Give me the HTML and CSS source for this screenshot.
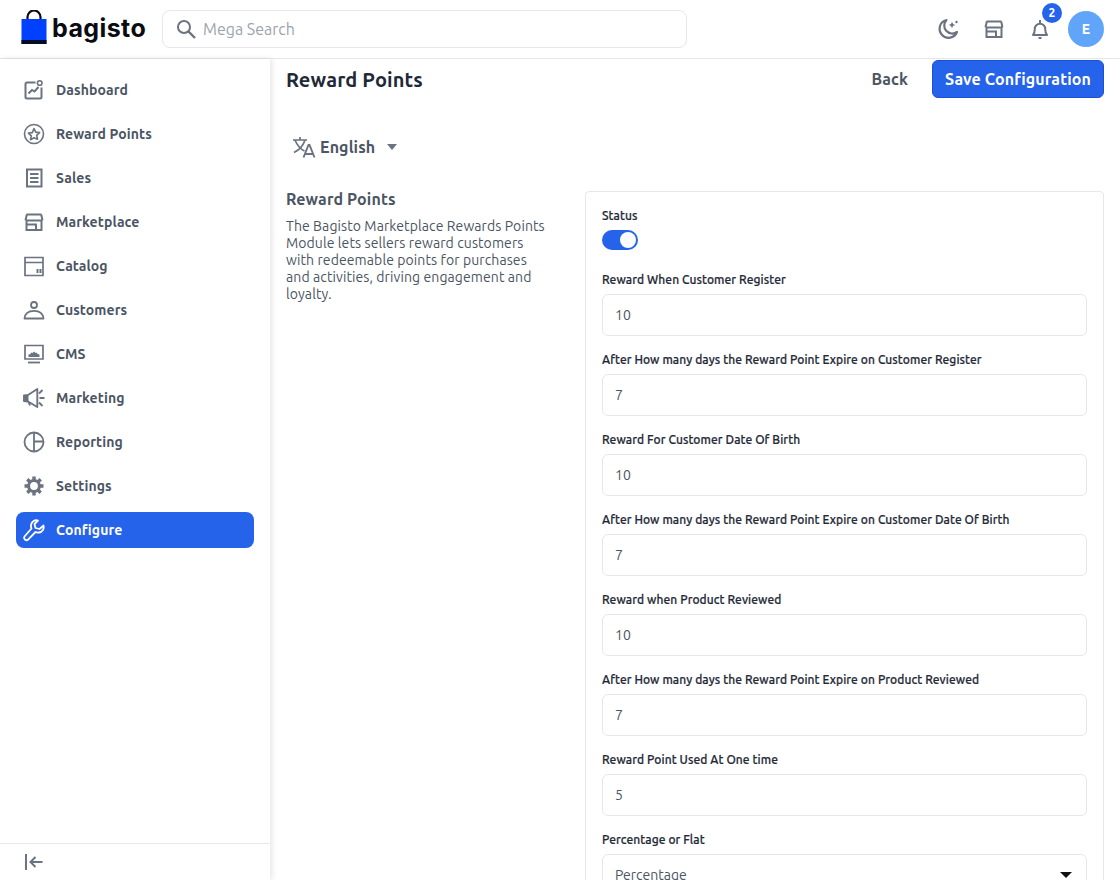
FILE: index.html
```html
<!DOCTYPE html>
<html lang="en">
<head>
<meta charset="utf-8">
<title>Reward Points</title>
<link rel="stylesheet" href="styles.css">
</head>
<body>
<header class="topbar">
  <div class="brand">
    <svg class="bag" viewBox="0 0 26 35" width="26" height="35"><path d="M6.500 9.500V7a6.500 6.500 0 0 1 13 0v2.500" fill="none" stroke="#0b0b12" stroke-width="2.200"/><rect x="0.500" y="9" width="25" height="25" fill="#0041ff"/><rect x="0.500" y="30" width="25" height="4" fill="#060b26"/></svg>
    <span class="wordmark">bagisto</span>
  </div>
  <div class="search">
    <svg class="search-icon" viewBox="0 0 24 24" width="24" height="24"><circle cx="10" cy="10" r="6" fill="none" stroke="#6b7280" stroke-width="2"/><path d="M14.500 14.500 21 21" stroke="#6b7280" stroke-width="2.400"/></svg>
    <span class="search-text">Mega Search</span>
  </div>
  <div class="top-actions">
    <svg class="top-icon" viewBox="0 0 24 24" width="24" height="24"><path d="M10.500 3A9 9 0 1 0 21 15a8 8 0 0 1-10.500-12Z" fill="none" stroke="#6b7280" stroke-width="2.200" stroke-linejoin="round"/><path d="M16 4.800l1 2.200 2.200 1-2.200 1-1 2.200-1-2.200-2.200-1 2.200-1Z" fill="#6b7280"/><circle cx="20.500" cy="5" r="1.200" fill="#6b7280"/></svg>
    <svg class="top-icon" viewBox="0 0 24 24" width="24" height="24"><path d="M4.500 4.500h15M3.500 10.500h17M4.800 4.500l-1.300 6M19.200 4.500l1.300 6M4.500 10.500V20h15v-9.500M4.500 14.500H14V20" fill="none" stroke="#6b7280" stroke-width="2"/></svg>
    <div class="bell-wrap">
      <svg class="top-icon" viewBox="0 0 24 24" width="24" height="24"><path d="M5 18c1.500-1.500 1.800-3 1.800-6a5.200 5.200 0 0 1 10.400 0c0 3 .3 4.500 1.800 6ZM12 3v3.500" fill="none" stroke="#6b7280" stroke-width="2" stroke-linejoin="round"/><path d="M10.500 21h3" stroke="#6b7280" stroke-width="2"/></svg>
      <span class="badge">2</span>
    </div>
    <span class="avatar">E</span>
  </div>
</header>
<div class="shell">
  <aside class="sidebar">
    <nav class="nav">
      <a class="nav-item"><svg viewBox="0 0 24 24" width="24" height="24"><path d="M13.500 4.500H5a1.500 1.500 0 0 0-1.500 1.500v13A1.500 1.500 0 0 0 5 20.500h13a1.500 1.500 0 0 0 1.500-1.500V9.500" fill="none" stroke="#6b7280" stroke-width="2"/><circle cx="17.700" cy="5" r="2.300" fill="none" stroke="#6b7280" stroke-width="1.600"/><path d="M6.500 15.500l3.500-3.500 2.500 1.500 4-4.500" fill="none" stroke="#6b7280" stroke-width="2"/></svg><span>Dashboard</span></a>
      <a class="nav-item"><svg viewBox="0 0 24 24" width="24" height="24"><circle cx="12" cy="12" r="9.500" fill="none" stroke="#6b7280" stroke-width="1.600"/><path d="M12 6.500l1.700 3.600 3.900.5-2.900 2.700.8 3.900L12 15.800l-3.500 1.900.8-3.900-2.900-2.700 3.900-.5Z" fill="none" stroke="#6b7280" stroke-width="1.600" stroke-linejoin="round"/></svg><span>Reward Points</span></a>
      <a class="nav-item"><svg viewBox="0 0 24 24" width="24" height="24"><path d="M5 3.500h14.500v17H5Z" fill="none" stroke="#6b7280" stroke-width="2"/><path d="M8 8h8.500M8 12h8.500M8 16h8.500" stroke="#6b7280" stroke-width="1.800"/></svg><span>Sales</span></a>
      <a class="nav-item"><svg viewBox="0 0 24 24" width="24" height="24"><path d="M4.500 4.500h15M3.500 10.500h17M4.800 4.500l-1.300 6M19.200 4.500l1.300 6M4.500 10.500V20h15v-9.500M4.500 14.500H14V20" fill="none" stroke="#6b7280" stroke-width="2"/></svg><span>Marketplace</span></a>
      <a class="nav-item"><svg viewBox="0 0 24 24" width="24" height="24"><path d="M3 3.500h18v18H3ZM3 8.500h18" fill="none" stroke="#6b7280" stroke-width="1.700"/><path d="M15 15h2v4h-2ZM18 15h2v4h-2Z" fill="#6b7280" transform="translate(-.5 0)"/></svg><span>Catalog</span></a>
      <a class="nav-item"><svg viewBox="0 0 24 24" width="24" height="24"><circle cx="12" cy="7" r="3" fill="none" stroke="#6b7280" stroke-width="1.800"/><path d="M2.500 20.500C3 15 7 12.800 12 12.800s9 2.200 9.500 7.700Z" fill="none" stroke="#6b7280" stroke-width="1.800" stroke-linejoin="round"/></svg><span>Customers</span></a>
      <a class="nav-item"><svg viewBox="0 0 24 24" width="24" height="24"><path d="M3 3.500h18v13.500H3Z" fill="none" stroke="#6b7280" stroke-width="1.700"/><path d="M6 20.500h12" stroke="#6b7280" stroke-width="1.800"/><path d="M6.500 15v-2.500l2-.5.700-1.500 1.300.5L12 9.500l1.500 1.500 1.300-.5.700 1.500 2 .5V15Z" fill="#6b7280"/></svg><span>CMS</span></a>
      <a class="nav-item"><svg viewBox="0 0 24 24" width="24" height="24"><path d="M2 9.500v5.500l4 .5 9.300 5.500V3L6 9Z" fill="none" stroke="#6b7280" stroke-width="1.900" stroke-linejoin="round"/><path d="M2 9.500h4.500v6H2Z" fill="#6b7280"/><path d="M6.500 16l1.500 3.500M17.500 12h5M17 7.500l3.500-3.500M17 16.500l3.500 3.500" stroke="#6b7280" stroke-width="1.900" fill="none"/></svg><span>Marketing</span></a>
      <a class="nav-item"><svg viewBox="0 0 24 24" width="24" height="24"><circle cx="12" cy="12" r="9.500" fill="none" stroke="#6b7280" stroke-width="1.800"/><path d="M12 2.500v19M12 11.500h9.500" stroke="#6b7280" stroke-width="1.800" fill="none"/></svg><span>Reporting</span></a>
      <a class="nav-item"><svg viewBox="0 0 24 24" width="24" height="24"><circle cx="12" cy="12" r="5.400" fill="none" stroke="#6b7280" stroke-width="3"/><path d="M12 2.500v3.500M12 18v3.500M2.500 12H6M18 12h3.500M5.300 5.300l2.500 2.500M16.200 16.200l2.500 2.500M5.300 18.700l2.500-2.500M16.200 7.800l2.500-2.500" stroke="#6b7280" stroke-width="3.400"/></svg><span>Settings</span></a>
      <a class="nav-item active"><svg viewBox="0 0 24 24" width="24" height="24"><path d="M21.500 7.500 17.500 11l-4-1-1-4 3.500-3.500c-3-1-6.500 1-7 4.500-.2 1.300 0 2.500.5 3.500L2.500 18.500a2 2 0 0 0 0 2.500l.8.800a2 2 0 0 0 2.500 0L13.500 14c1 .5 2.200.7 3.500.5 3.500-.5 5.500-4 4.500-7Z" fill="none" stroke="#fff" stroke-width="1.800" stroke-linejoin="round"/></svg><span>Configure</span></a>
    </nav>
    <div class="collapse">
      <svg viewBox="0 0 24 24" width="24" height="24"><path d="M4 4v16M20.500 12H8.500M13.500 7l-5 5 5 5" fill="none" stroke="#6b7280" stroke-width="2"/></svg>
    </div>
  </aside>
  <main class="main">
    <div class="page-head">
      <h1>Reward Points</h1>
      <div class="head-actions">
        <a class="back">Back</a>
        <button class="save" type="button">Save Configuration</button>
      </div>
    </div>
    <div class="locale">
      <svg viewBox="0 0 24 24" width="24" height="24"><path d="M1 5h14M8 2v3M3 5c2 5 5.500 9 9.500 11M13 5c-1.500 5-5 9.500-11 12.500" fill="none" stroke="#6b7280" stroke-width="1.700"/><path d="M11.500 22.500 16.500 10h1l5 12.500M13 19h8" fill="none" stroke="#6b7280" stroke-width="1.900"/></svg>
      <span class="locale-name">English</span>
      <span class="caret"></span>
    </div>
    <div class="config">
      <section class="intro">
        <h2>Reward Points</h2>
        <p>The Bagisto Marketplace Rewards Points Module lets sellers reward customers with redeemable points for purchases and activities, driving engagement and loyalty.</p>
      </section>
      <form class="card">
        <div class="field toggle-field">
          <label>Status</label>
          <span class="toggle"><span class="knob"></span></span>
        </div>
        <div class="field"><label>Reward When Customer Register</label><input value="10"></div>
        <div class="field"><label>After How many days the Reward Point Expire on Customer Register</label><input value="7"></div>
        <div class="field"><label>Reward For Customer Date Of Birth</label><input value="10"></div>
        <div class="field"><label>After How many days the Reward Point Expire on Customer Date Of Birth</label><input value="7"></div>
        <div class="field"><label>Reward when Product Reviewed</label><input value="10"></div>
        <div class="field"><label>After How many days the Reward Point Expire on Product Reviewed</label><input value="7"></div>
        <div class="field"><label>Reward Point Used At One time</label><input value="5"></div>
        <div class="field"><label>Percentage or Flat</label>
          <div class="select-wrap"><select><option>Percentage</option></select></div>
        </div>
      </form>
    </div>
  </main>
</div>
</body>
</html>
```
FILE: styles.css
```css
* { box-sizing: border-box; margin: 0; padding: 0; letter-spacing: .007em; }
html, body { height: 100%; overflow: hidden; background: #fff; }
body { font-family: Ubuntu, "Noto Sans", sans-serif; color: #1f2937; }
svg { display: block; flex: none; }

.topbar { height: 59px; display: flex; align-items: center; padding: 0 16px 1px 21px; border-bottom: 1px solid #e5e7eb; }
.brand { display: flex; align-items: center; gap: 5px; width: 141px; flex: none; margin-bottom: 2px; }
.wordmark { font-family: Inter, sans-serif; font-weight: 700; font-size: 25px; letter-spacing: 0.4px; color: #0b0b12; line-height: 30px; }
.search { width: 525px; height: 38px; flex: none; display: flex; align-items: center; gap: 5px; padding: 0 11px; border: 1px solid #e5e7eb; border-radius: 8px; }
.search-text { font-size: 16px; color: #9ca3af; letter-spacing: 0; }
.top-actions { margin-left: auto; display: flex; align-items: center; gap: 22px; }
.bell-wrap { position: relative; }
.badge { position: absolute; top: -14px; right: -10px; width: 20px; height: 20px; border-radius: 50%; background: #2563eb; color: #fff; font-size: 12px; font-weight: 700; display: flex; align-items: center; justify-content: center; }
.avatar { width: 36px; height: 36px; border-radius: 50%; background: #60a5fa; color: #fff; font-weight: 600; font-size: 14px; display: flex; align-items: center; justify-content: center; margin-left: -6px; }

.shell { display: flex; height: calc(100vh - 59px); }
.sidebar { width: 270px; flex: none; display: flex; flex-direction: column; box-shadow: 2px 0 6px rgba(0,0,0,.1); background: #fff; position: relative; }
.nav { flex: 1; padding: 13px 16px 0; display: flex; flex-direction: column; gap: 8px; }
.nav-item { height: 36px; display: flex; align-items: center; gap: 10px; padding-left: 6px; border-radius: 8px; font-size: 14px; font-weight: 600; color: #4b5563; }
.nav-item.active { background: #2563eb; color: #fff; }
.collapse { height: 37px; border-top: 1px solid #e5e7eb; padding: 6px 0 0 22px; }

.main { flex: 1; min-width: 0; padding: 1px 16px 0; overflow: hidden; }
.page-head { display: flex; justify-content: space-between; align-items: center; height: 38px; }
h1 { font-size: 20px; font-weight: 700; color: #1f2937; }
.head-actions { display: flex; align-items: center; gap: 24px; }
.back { font-size: 16px; font-weight: 600; color: #4b5563; }
.save { height: 38px; width: 172px; background: #2563eb; border: 1px solid #1d4ed8; border-radius: 6px; color: #fff; font: 600 16px Ubuntu, "Noto Sans", sans-serif; }
.locale { display: flex; align-items: center; height: 40px; margin-top: 29px; padding-left: 6px; gap: 4px; }
.locale-name { font-size: 16px; font-weight: 600; color: #4b5563; }
.caret { margin-left: 8px; width: 0; height: 0; border-left: 5px solid transparent; border-right: 5px solid transparent; border-top: 6px solid #6b7280; }
.config { display: flex; margin-top: 24px; }
.intro { width: 299px; flex: none; }
h2 { font-size: 16px; font-weight: 600; color: #4b5563; line-height: 18px; margin: -1px 0 0; }
.intro p { font-size: 14px; line-height: 17px; color: #4b5563; margin-top: 10px; width: 265px; }
.card { width: 519px; flex: none; border: 1px solid #e5e7eb; border-radius: 4px; padding: 15px 16px; background: #fff; }
.field { margin-bottom: 14px; }
.field label { display: block; font-size: 12px; font-weight: 500; line-height: 18px; margin-bottom: 5px; padding-top: 1px; color: #1f2937; -webkit-text-stroke: .2px #1f2937; }
.toggle-field { margin-bottom: 20px; }
.toggle-field label { margin-bottom: 5px; padding-top: 0; }
.toggle { display: block; width: 36px; height: 20px; border-radius: 10px; background: #2563eb; position: relative; }
.knob { position: absolute; top: 2px; right: 2px; width: 16px; height: 16px; border-radius: 50%; background: #fff; }
input, select { display: block; width: 100%; height: 42px; padding: 0 12px; border: 1px solid #e5e7eb; border-radius: 6px; background: #fff; font: 14px Ubuntu, "Noto Sans", sans-serif; color: #4b5563; appearance: none; letter-spacing: 0; }
.select-wrap { position: relative; }
.select-wrap::after { content: ""; position: absolute; right: 15px; top: 18px; border-left: 6px solid transparent; border-right: 6px solid transparent; border-top: 6px solid #111; }
```
